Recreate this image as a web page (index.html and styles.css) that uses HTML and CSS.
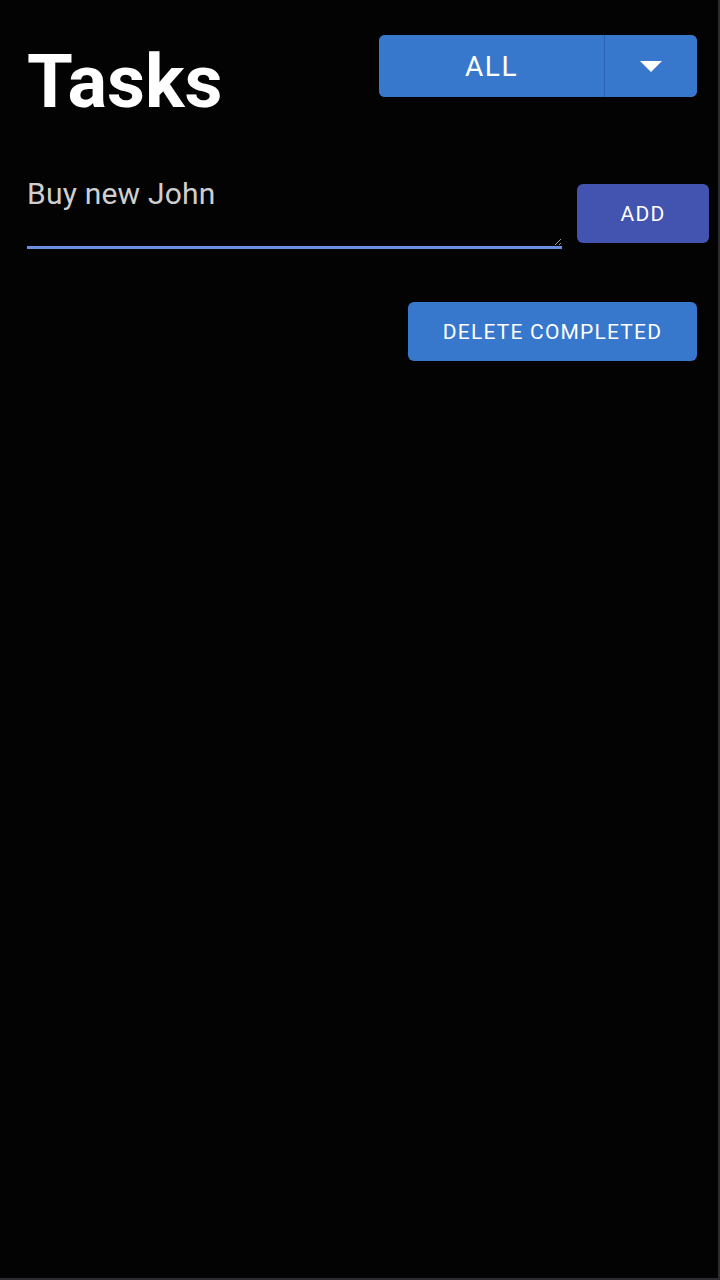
FILE: index.html
```html
<!DOCTYPE html>
<html lang="en">
<head>
<meta charset="utf-8">
<title>Tasks</title>
<link rel="stylesheet" href="styles.css">
</head>
<body>
<div class="app">
  <header class="header">
    <h1 class="title">Tasks</h1>
    <div class="split-btn">
      <button class="split-main">ALL</button>
      <button class="split-toggle" aria-label="Choose filter">
        <svg width="22" height="11" viewBox="0 0 22 11"><path d="M0 0 L22 0 L11 11 Z" fill="#fff"/></svg>
      </button>
    </div>
  </header>
  <div class="new-task">
    <textarea class="task-input" id="task-input">Buy new John</textarea>
    <button class="add-btn">ADD</button>
  </div>
  <div class="actions">
    <button class="delete-btn">DELETE COMPLETED</button>
  </div>
</div>
<script src="app.js"></script>
</body>
</html>
```
FILE: styles.css
```css
html, body {
  margin: 0;
  padding: 0;
  background: #000;
}
body {
  width: 720px;
  height: 1280px;
  font-family: Roboto, "Noto Sans", sans-serif;
}
.app {
  box-sizing: border-box;
  width: 720px;
  height: 1280px;
  background: #030303;
  border-right: 2px solid #2b2b30;
  border-bottom: 2px solid #2b2b30;
  padding: 35px 21px 0 27px;
}
.header {
  display: flex;
  justify-content: space-between;
  align-items: flex-start;
}
.title {
  margin: 10px 0 0 0;
  font-size: 74px;
  line-height: 74px;
  font-weight: 700;
  color: #fff;
}
.split-btn {
  display: flex;
  width: 318px;
  height: 62px;
  border-radius: 6px;
  overflow: hidden;
  background: #3777cc;
}
button {
  font-family: Roboto, "Noto Sans", sans-serif;
  border: none;
  color: #fff;
  cursor: pointer;
}
.split-main {
  width: 226px;
  background: #3777cc;
  font-size: 28px;
  letter-spacing: 1.5px;
  padding: 0;
  border-right: 1px solid #2a63b3;
}
.split-toggle {
  flex: 1;
  background: #3777cc;
  display: flex;
  align-items: center;
  justify-content: center;
  padding: 0;
}
.split-toggle svg { display: block; margin-top: 1px; }
.new-task {
  display: flex;
  align-items: flex-start;
  gap: 15px;
  margin-top: 64px;
  margin-right: -12px;
}
.task-input {
  box-sizing: border-box;
  width: 535px;
  height: 73px;
  margin-top: -7px;
  background: transparent;
  border: none;
  border-bottom: 3px solid #6b8fdf;
  color: #cfcfcf;
  caret-color: #cfcfcf;
  font-family: Roboto, "Noto Sans", sans-serif;
  font-size: 30px;
  line-height: 36px;
  letter-spacing: 0.2px;
  padding: 0;
  outline: none;
}
.add-btn {
  width: 132px;
  height: 59px;
  margin-top: 1px;
  border-radius: 6px;
  background: #4353b0;
  font-size: 21px;
  letter-spacing: 1.2px;
}
.actions {
  display: flex;
  justify-content: flex-end;
  margin-top: 53px;
}
.delete-btn {
  width: 289px;
  height: 59px;
  border-radius: 6px;
  background: #3777cc;
  font-size: 21px;
  letter-spacing: 1.2px;
}
```
FILE: app.js
```js
var input = document.getElementById('task-input');
input.focus();
var end = input.value.length;
input.setSelectionRange(end, end);
```
